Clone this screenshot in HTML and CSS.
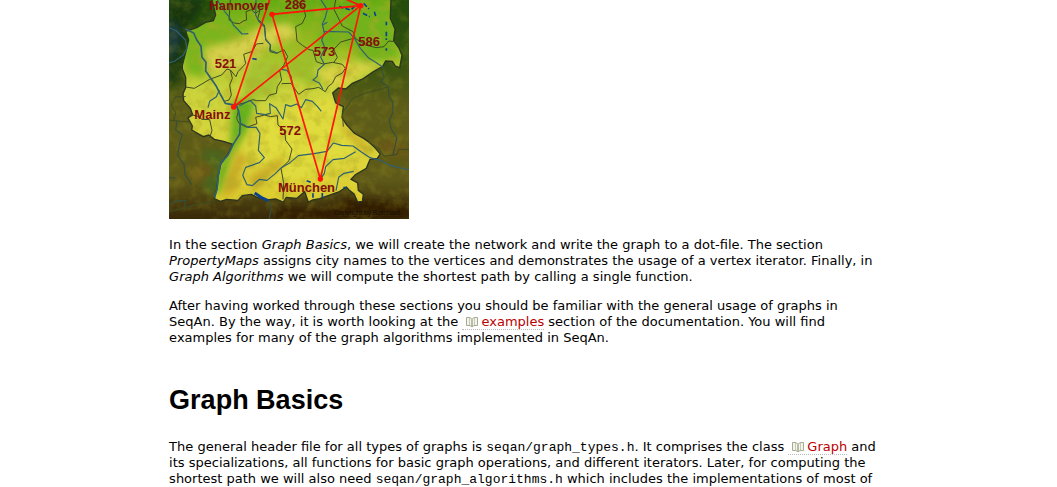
FILE: index.html
```
<!DOCTYPE html>
<html lang="en">
<head>
<meta charset="utf-8">
<title>Graph Basics</title>
<link rel="stylesheet" href="styles.css">
</head>
<body>
<svg class="symbols" aria-hidden="true">
  <symbol id="book" viewBox="0 0 14 12">
    <path d="M7 3.5Q6 1.5 4 1.5H1.5V9.5H4Q6 9.500 7 11Q8 9.500 10 9.500H12.500V1.500H10Q8 1.500 7 3.500Z" fill="#f4f4ec" stroke="#a6aa90"/>
    <path d="M7 3.500V11" stroke="#a6aa90" stroke-width="1.500" fill="none"/>
    <path d="M4.500 2V9M9.500 2V9" stroke="#c6c9b6" fill="none"/>
  </symbol>
</svg>
<main class="wiki">
  <svg class="map" viewBox="0 0 720 657" role="img" aria-label="Map of Germany with city distances">
    <defs>
      <linearGradient id="land" x1="0" y1="0" x2="0" y2="1">
        <stop offset="0" stop-color="#64ac14"/>
        <stop offset=".2" stop-color="#94bd20"/>
        <stop offset=".42" stop-color="#cbd43c"/>
        <stop offset=".75" stop-color="#ded43a"/>
        <stop offset="1" stop-color="#dcc82a"/>
      </linearGradient>
      <linearGradient id="abroad" x1="0" y1="0" x2="0" y2="1">
        <stop offset="0" stop-color="#234c0c"/>
        <stop offset=".25" stop-color="#2f500e"/>
        <stop offset=".48" stop-color="#5c5c18"/>
        <stop offset=".82" stop-color="#5e5918"/>
        <stop offset="1" stop-color="#382808"/>
      </linearGradient>
      <filter id="soft" x="-30%" y="-30%" width="160%" height="160%"><feGaussianBlur stdDeviation="11"/></filter>
      <filter id="relief" x="0" y="0" width="100%" height="100%">
        <feTurbulence type="fractalNoise" baseFrequency=".03" numOctaves="4" seed="8"/>
        <feColorMatrix values="0 0 0 0 .43  0 0 0 0 .40  0 0 0 0 .02  2.8 0 0 0 -1.25"/>
      </filter>
      <clipPath id="germany">
        <path id="border" d="M128-5L140 45 133 62 110 67 83 83 68 88 50 94 59 120 48 165 40 196 40 207 50 232 50 263 42 281 44 302 64 325 71 344 57 354 70 378 68 390 103 410 119 405 136 418 164 424 192 433 176 463 155 493 148 525 144 565 136 596 154 604 173 598 207 601 220 587 247 583 264 592 294 600 320 597 343 606 352 592 384 595 407 575 418 606 431 600 452 596 480 586 509 576 532 561 540 570 555 582 566 606 580 604 583 583 568 571 566 549 546 538 559 524 592 505 603 478 625 475 634 462 615 440 600 427 585 416 556 400 531 372 519 353 523 320 500 308 491 279 508 264 530 267 550 250 583 236 611 216 641 199 650 183 670 184 679 198 692 203 699 166 690 144 674 122 678 87 664 55 666-5Z"/>
      </clipPath>
    </defs>
    <rect width="720" height="657" fill="url(#abroad)"/>
    <g filter="url(#soft)">
      <path d="M0 0H110L60 80 30 240 0 260Z" fill="#123410"/>
      <path d="M0 60L30 90 20 150 0 180Z" fill="#1c3b48"/>
      <path d="M100 450L170 450 140 590 100 560Z" fill="#49651a"/>
      <path d="M310 657L340 620 480 630 520 595 600 600 720 610V657Z" fill="#301c06"/>
      <path d="M100 480L60 530 90 550 140 510ZM610 430L670 470 720 460 690 420Z" fill="#6c5815"/>
    </g>
    <rect width="720" height="657" filter="url(#relief)" opacity=".2"/>
    <g clip-path="url(#germany)">
      <rect width="720" height="657" fill="url(#land)"/>
      <g filter="url(#soft)">
        <path d="M40 100L130 40 250 60 190 120 110 130 110 230 50 220Z" fill="#79b51e"/>
        <path d="M105 150L210 120 270 80 360 70 390 110 280 150 240 210 120 220Z" fill="#d5d04b"/>
        <path d="M240 170L330 190 320 290 220 300Z" fill="#a6c331"/>
        <path d="M340 160L450 140 510 200 430 260 350 210Z" fill="#9dc02a"/>
        <path d="M460 40L660 20 690 170 590 190 530 130 440 160Z" fill="#72b31b"/>
        <path d="M430 210L520 190 640 190 500 270Z" fill="#d8d344"/>
        <path d="M190 300L260 300 235 390 190 465 158 570 138 590 145 510 184 430Z" fill="#64b01c"/>
        <path d="M270 350L490 290 590 440 480 520 280 550Z" fill="#e0dc3e"/>
      </g>
      <g fill="#bd941c" opacity=".65" filter="url(#soft)">
        <path d="M205 450L245 485 215 500 205 570 160 595 175 535Z"/>
        <path d="M235 535L335 470 350 490 260 570Z"/>
        <path d="M500 350L590 430 620 465 585 455 530 405Z"/>
      </g>
      <rect width="720" height="657" filter="url(#relief)" opacity=".5"/>
    </g>
    <use href="#border" fill="none" stroke="#2c3420" stroke-width="4"/>
    <g class="line" stroke="#3f4c22" stroke-width="3">
      <path d="M184 0L180 60 195 69 211 71 223 63 233 60 231 35 247 29 259 40 273 30 266 57 286 75 290 121 305 135 303 155 323 160 345 149 356 170 344 196 332 211 338 240 325 260 322 280 300 286 290 302 263 302 252 299 224 309 197 316"/>
      <path d="M122 238L158 225 174 207 184 210 190 235 182 255 187 285 180 300 166 304M184 210L201 230 207 215 230 191 224 163 250 154 262 132 283 130M50 261L76 265 102 250 122 238"/>
      <path d="M382 0L404 23 410 48 400 70 380 80 384 123 400 136 420 149 432 151 442 185 462 192 491 187 520 193 529 205 520 219 500 230 490 250 478 259 469 275 449 262 432 266 410 268 389 283 366 250 338 251"/>
      <path d="M500 0L495 28 520 78 552 95 559 115 590 135 621 143 645 140 659 123 690 126M550 116L515 126 494 148 505 172 494 188"/>
      <path d="M210 370L233 382 264 371 260 352 286 345 305 350 325 347 327 375 347 391 350 421 369 447 360 482 336 505 344 550 342 598M64 344L84 348 99 358 122 359 129 391 122 414"/>
      <path d="M0 360L14 362 20 338 7 315 20 290 50 290M15 362L60 366M200 310L208 333 203 355 210 370M0 635L42 625 95 610 136 604M523 380L520 340 550 296 590 279 637 267 661 259M600 427L630 445 645 469 684 463 689 448 720 449"/>
    </g>
    <g class="line" stroke="#2f6070" stroke-width="3.500">
      <path stroke-width="5" d="M48 86L74 99 84 121 96 139 99 172 111 187 110 213 127 237 142 259 151 277 169 310 202 316 209 333 214 363 212 402 192 434 178 464 155 490 148 527 144 568 136 593"/>
      <path d="M0 83L23 93 49 120 54 145 43 165 14 185 0 188M145 0L166 33 182 53 193 75 208 90 219 102 238 101M151 270L142 290 122 304 117 323M211 318L243 301 260 318 263 340 289 344 304 340 302 311 321 323 342 357 350 314 365 319 383 312 397 323 410 299 430 304 445 319 457 334"/>
      <path d="M214 369L238 382 262 382 273 401 268 451 286 473 271 488 230 502 221 526 234 554 250 557 271 538 294 541 319 521 337 503 363 488 388 467 435 461 474 454 493 429 518 436 552 438 576 455 603 473 634 481 665 497 720 510"/>
      <path d="M455 536L466 520 470 500 492 479 526 475 560 455M501 572L509 532 525 520 554 514M261 0L260 45 269 63 287 81 290 117 304 134 302 150 326 160"/>
      <path d="M456 0L475 29 468 55 460 72 466 99 458 120 468 145 455 171 466 193 447 210 444 230 432 240 451 249 462 268M464 94L539 96 557 116 574 145 598 173 620 187 642 202M461 75L475 67M338 208L354 211 366 229 370 250"/>
    </g>
    <g class="line" stroke="#35503c" stroke-width="3.500">
      <path d="M637 208L646 233 635 245 658 261 660 291 671 305 672 337 661 361 666 386 684 414 671 467M0 534L18 533M24 362L20 390 40 404 31 433 26 466 45 493 48 523 68 554M0 612L26 602 49 601 48 621M300 600L307 626 300 657"/>
    </g>
    <g class="line" stroke="#0b438b" stroke-width="5">
      <path stroke-width="9" d="M257 579L276 592 297 602"/>
      <path d="M250 176L263 178M523 563L533 563M510 20L546 30 565 10M584 10L600 27M582 40L602 50M460 579V596M432 580V593M413 542L425 547M616 35L620 48M652 65V76M652 95V120M652 145V152" stroke-dasharray="14 6"/>
    </g>
    <g class="routes">
      <path d="M305-10L194 321 575 17 454 537 309 43 575 17 525-5"/>
      <g stroke="none"><circle cx="194" cy="321" r="8"/><circle cx="309" cy="43" r="8"/><circle cx="575" cy="17" r="8"/><circle cx="454" cy="537" r="8"/></g>
    </g>
    <g class="labels">
      <text x="121" y="29">Hannover</text>
      <text x="347" y="26">286</text>
      <text x="137" y="204">521</text>
      <text x="434" y="168">573</text>
      <text x="568" y="139">586</text>
      <text x="76" y="356">Mainz</text>
      <text x="331" y="404">572</text>
      <text x="327" y="577">München</text>
    </g>
    <text class="credit" x="494" y="645">Copyright by Bernhard</text>
  </svg>

  <p>In the section <em>Graph Basics</em>, we will create the network and write the graph to a dot-file. The section <em>PropertyMaps</em> assigns city names to the vertices and demonstrates the usage of a vertex iterator. Finally, in <em>Graph Algorithms</em> we will compute the shortest path by calling a single function.</p>
  <p>After having worked through these sections you should be familiar with the general usage of graphs in SeqAn. By the way, it is worth looking at the <a href="#examples"><svg class="book" aria-hidden="true"><use href="#book"/></svg>examples</a> section of the documentation. You will find examples for many of the graph algorithms implemented in SeqAn.</p>
  <h1>Graph Basics</h1>
  <p>The general header file for all types of graphs is <code>seqan/graph_types.h</code>. It comprises the class <a href="#graph"><svg class="book" aria-hidden="true"><use href="#book"/></svg>Graph</a> and its specializations, all functions for basic graph operations, and different iterators. Later, for computing the shortest path we will also need <code>seqan/graph_algorithms.h</code> which includes the implementations of most of</p>
</main>
</body>
</html>
```
FILE: styles.css
```
body {
  margin: 0;
  background: #fff;
  color: #000;
  font: 13px/16px Verdana, "DejaVu Sans", sans-serif;
}

.symbols {
  position: absolute;
  width: 0;
  height: 0;
}

.wiki {
  max-width: 710px;
  margin: 0 14% 0 16%;
}

.map {
  display: block;
  width: 240px;
  height: auto;
  margin-bottom: 18px;
}

.line {
  fill: none;
  stroke-linejoin: round;
}

.routes {
  fill: #ff1408;
  stroke: #ff1408;
  stroke-width: 5;
}

.routes path {
  fill: none;
}

.labels {
  fill: #850f08;
  font: bold 39px "Liberation Sans", Arial, sans-serif;
}

.credit {
  fill: #160d02;
  font: 20px "Liberation Sans", Arial, sans-serif;
}

p {
  margin: 0 0 13px;
}

h1 {
  margin: 38px 0 23px;
  font: bold 27px/32px "Liberation Sans", Arial, sans-serif;
}

a {
  color: #b00;
  text-decoration: none;
  border-bottom: 1px dotted #bbb;
}

.book {
  width: 14px;
  height: 12px;
  margin: 0 2px 0 3px;
  vertical-align: -2px;
}

code {
  font: 13px/1 "Liberation Mono", "Courier New", monospace;
}
```
